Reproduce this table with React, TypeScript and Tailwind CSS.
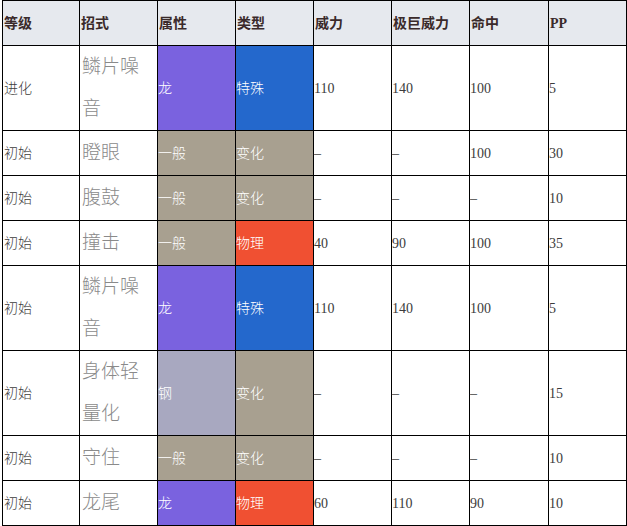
import React from 'react';

type Move = {
  level: string;
  name: React.ReactNode;
  type: string;
  category: string;
  power: string;
  maxPower: string;
  accuracy: string;
  pp: string;
  tall?: boolean;
};

const typeColors: Record<string, string> = {
  龙: 'bg-[#7a62df]',
  一般: 'bg-[#a8a090]',
  钢: 'bg-[#a8a8c0]',
};

const categoryColors: Record<string, string> = {
  特殊: 'bg-[#2468cc]',
  变化: 'bg-[#a8a090]',
  物理: 'bg-[#f05032]',
};

const moves: Move[] = [
  { level: '进化', name: <>鳞片噪<br />音</>, type: '龙', category: '特殊', power: '110', maxPower: '140', accuracy: '100', pp: '5', tall: true },
  { level: '初始', name: '瞪眼', type: '一般', category: '变化', power: '–', maxPower: '–', accuracy: '100', pp: '30' },
  { level: '初始', name: '腹鼓', type: '一般', category: '变化', power: '–', maxPower: '–', accuracy: '–', pp: '10' },
  { level: '初始', name: '撞击', type: '一般', category: '物理', power: '40', maxPower: '90', accuracy: '100', pp: '35' },
  { level: '初始', name: <>鳞片噪<br />音</>, type: '龙', category: '特殊', power: '110', maxPower: '140', accuracy: '100', pp: '5', tall: true },
  { level: '初始', name: <>身体轻<br />量化</>, type: '钢', category: '变化', power: '–', maxPower: '–', accuracy: '–', pp: '15', tall: true },
  { level: '初始', name: '守住', type: '一般', category: '变化', power: '–', maxPower: '–', accuracy: '–', pp: '10' },
  { level: '初始', name: '龙尾', type: '龙', category: '物理', power: '60', maxPower: '110', accuracy: '90', pp: '10' },
];

const headers = ['等级', '招式', '属性', '类型', '威力', '极巨威力', '命中', 'PP'];
const widths = [77, 78, 78, 78, 78, 78, 79, 78];

const font = { fontFamily: '"Liberation Serif", "Noto Sans CJK SC", serif' };

export default function App() {
  return (
    <div className="bg-white pl-[2px]" style={font}>
      <table className="border-collapse table-fixed w-[625px] text-[14px] font-light text-[#3c3c3c]">
        <colgroup>
          {widths.map((w, i) => (
            <col key={i} style={{ width: w }} />
          ))}
        </colgroup>
        <thead>
          <tr className="bg-[#e6e9ee]">
            {headers.map((h) => (
              <th
                key={h}
                className="h-[45px] border border-black pl-[1px] text-left align-middle text-[14px] font-bold text-[#3a2a2a]"
              >
                {h}
              </th>
            ))}
          </tr>
        </thead>
        <tbody>
          {moves.map((m, i) => {
            const h = m.tall ? 'h-[85px]' : 'h-[45px]';
            return (
              <tr key={i}>
                <td className={`${h} border border-black pl-[1px] align-middle`}>{m.level}</td>
                <td className={`${h} border border-black pl-[2px] align-middle text-[19px] leading-[42px] text-[#8a8a8a]`}>
                  {m.name}
                </td>
                <td className={`${h} border border-black pl-0 align-middle text-white ${typeColors[m.type]}`}>
                  {m.type}
                </td>
                <td className={`${h} border border-black pl-0 align-middle text-white ${categoryColors[m.category]}`}>
                  {m.category}
                </td>
                <td className={`${h} border border-black pl-0 align-middle`}>{m.power}</td>
                <td className={`${h} border border-black pl-0 align-middle`}>{m.maxPower}</td>
                <td className={`${h} border border-black pl-0 align-middle`}>{m.accuracy}</td>
                <td className={`${h} border border-black pl-0 align-middle`}>{m.pp}</td>
              </tr>
            );
          })}
        </tbody>
      </table>
    </div>
  );
}
